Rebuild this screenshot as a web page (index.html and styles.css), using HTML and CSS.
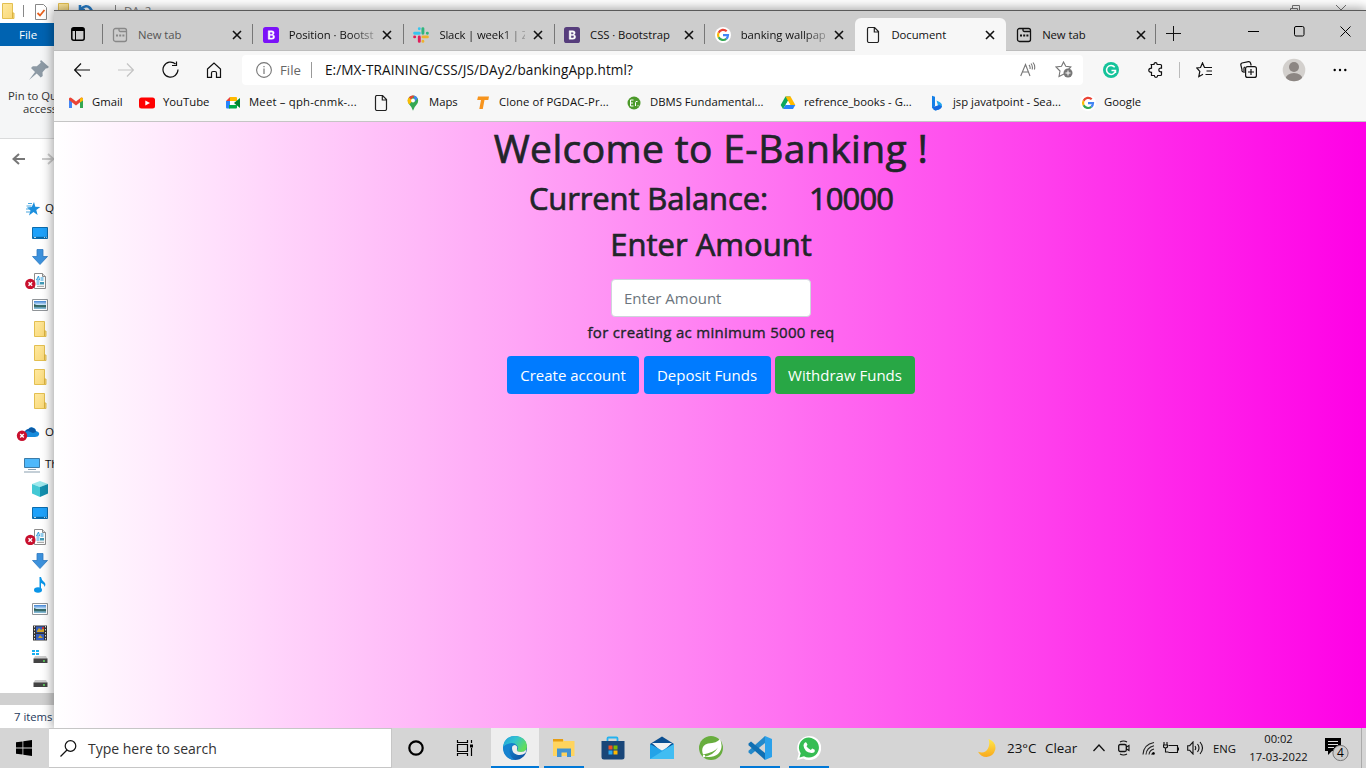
FILE: index.html
```
<!DOCTYPE html>
<html lang="en">
<head>
<meta charset="utf-8">
<title>Document</title>
<link rel="stylesheet" href="styles.css">
</head>
<body>
<svg class="defs" width="0" height="0">
  <defs>
    <linearGradient id="folderFill" x1="0" y1="0" x2="1" y2="1"><stop offset="0" stop-color="#ffe9a0"/><stop offset="1" stop-color="#f8d775"/></linearGradient>
    <linearGradient id="edgeA" x1="0" y1="0" x2="1" y2="1"><stop offset="0" stop-color="#1b9de2"/><stop offset="1" stop-color="#0c4a9c"/></linearGradient>
    <linearGradient id="edgeB" x1="0" y1="0" x2="1" y2=".5"><stop offset="0" stop-color="#219fdc"/><stop offset=".5" stop-color="#32c3d0"/><stop offset="1" stop-color="#62dd5b"/></linearGradient>
    <linearGradient id="moonFill" x1="0" y1="0" x2="0" y2="1"><stop offset="0" stop-color="#ffe84a"/><stop offset="1" stop-color="#f9a91c"/></linearGradient>
    <linearGradient id="skyFill" x1="0" y1="0" x2="0" y2="1"><stop offset="0" stop-color="#3f83d4"/><stop offset=".5" stop-color="#d8efff"/><stop offset=".55" stop-color="#326b6b"/><stop offset="1" stop-color="#8fc4e4"/></linearGradient>
  </defs>
  <symbol id="x" viewBox="0 0 10 10"><path d="M1 1l8 8M9 1L1 9" fill="none" stroke="currentColor" stroke-width="1.6"/></symbol>
  <symbol id="newtab" viewBox="0 0 16 16"><path d="M3.500 1.500h9a2 2 0 0 1 2 2v9a2 2 0 0 1-2 2h-9a2 2 0 0 1-2-2v-9a2 2 0 0 1 2-2zM7 1.500v1.500q0 1.500 1.500 1.500h6" fill="none" stroke="currentColor" stroke-width="1.300"/><path d="M4 7.500h2v2H4zm3.200 0h2v2h-2zm3.200 0h2v2h-2z" fill="currentColor"/></symbol>
  <symbol id="doc" viewBox="0 0 16 16"><path d="M2.500 2a1.500 1.500 0 0 1 1.500-1.500h5.500l4 4V14a1.500 1.500 0 0 1-1.500 1.500H4A1.500 1.500 0 0 1 2.500 14zM9.300.5V5h4.200" fill="none" stroke="#222" stroke-width="1.200"/></symbol>
  <symbol id="google" viewBox="0 0 16 16"><circle cx="8" cy="8" r="8" fill="#fff"/><g fill="none" stroke-width="2.200"><path d="M11.700 4.300A5 5 0 0 0 3.600 5.700" stroke="#ea4335"/><path d="M3.600 5.700a5 5 0 0 0 0 4.600" stroke="#fbbc05"/><path d="M3.600 10.300a5 5 0 0 0 7.700 1.500" stroke="#34a853"/><path d="M11.300 11.800A5 5 0 0 0 13 8.200H8" stroke="#4285f4"/></g></symbol>
  <symbol id="folder" viewBox="0 0 16 16"><path d="M2.500.5h10v9.500h1.500v5.500H2.500z" fill="url(#folderFill)" stroke="#e3bf50"/><path d="M12.500 15V9.500" stroke="#d9b040"/></symbol>
  <symbol id="desktop" viewBox="0 0 16 12"><path d="M.5.5h15v11H.5z" fill="#1da1fa" stroke="#0b6cad"/><path d="M1 9.800h14v1.400H1z" fill="#0767a3"/><path d="M2 10.400h2m8 0h1m1 0h.8" stroke="#fff" stroke-width=".8"/></symbol>
  <symbol id="down" viewBox="0 0 16 16"><path d="M5 .5h6v7h4.500L8 15.500.5 7.500H5z" fill="#3c91dc" stroke="#2d79c0" stroke-width=".8"/></symbol>
  <symbol id="docs" viewBox="0 0 24 16"><path d="M9.500.5h8l3 3v12h-11z" fill="#fff" stroke="#8c8c8c"/><path d="M17.500.5v3h3" fill="#ddd" stroke="#8c8c8c"/><path d="M11.500 7h3l-1-4-2 4M15.500 5h3M15.500 7h3M11.500 9h3M11.500 11h3" stroke="#269bdc" fill="none"/><path d="M15 9h4v2.500h-4z" fill="#4199b5"/><path d="M12 13.300h7" stroke="#999"/><circle cx="5.300" cy="12" r="5.200" fill="#c8102e" transform="translate(0 -1)"/><path d="M3.500 9.200l3.600 3.600m0-3.600l-3.600 3.600" stroke="#fff" stroke-width="1.400"/></symbol>
  <symbol id="picture" viewBox="0 0 16 12"><path d="M.5.5h15v11H.5z" fill="#fff" stroke="#909498"/><path d="M2 2h12v8H2z" fill="url(#skyFill)"/><path d="M2 5l5 2 7 .3V8L2 7.500z" fill="#32605a"/></symbol>
  <symbol id="boot" viewBox="0 0 16 16"><rect width="16" height="16" rx="2.600" fill="currentColor"/><path d="M5.200 3.700h3.700q2.300.1 2.300 2.100 0 1.500-1.300 1.900 1.800.4 1.800 2.300 0 2.200-2.700 2.300H5.200zM6.900 7.200h1.900q.8-.1.800-1 0-1-1-1H6.900zm0 3.700h2.200q.9-.1.900-1.100 0-1.200-1-1.200H6.900z" fill="#fff" fill-rule="evenodd" stroke="#fff" stroke-width=".4"/></symbol>
</svg>

<div class="screen">
  <section class="explorer">
    <div class="ex-title">
      <svg width="16" height="16"><use href="#folder"/></svg><i class="bar"></i>
      <svg class="check" width="14" height="16"><path d="M1.500.5h8l3 3v12h-11z" fill="#fff" stroke="#888"/><path d="M3.500 9l2.500 2.500L10.500 6" fill="none" stroke="#e8601c" stroke-width="1.800"/></svg>
      <svg class="fold2" width="16" height="16"><use href="#folder"/></svg>
      <svg class="undo" width="16" height="16" viewBox="0 0 16 16"><path d="M2 2v5h5M3 6q5-5 9-1t-2 8" fill="none" stroke="#277cc7" stroke-width="2.600"/></svg>
      <i class="bar bar2"></i><span>DA_2</span>
      <svg class="ex-restore" width="12" height="12"><path d="M1.500 4.500h7v7h-7zM3.500 4V1.500h7v7H9" fill="none" stroke="#777"/></svg>
      <svg class="ex-close" width="12" height="12"><path d="M1 1l10 10M11 1L1 11" stroke="#777"/></svg>
    </div>
    <div class="ex-file">File</div>
    <div class="ribbon">
      <svg width="22" height="22" viewBox="0 0 22 22"><path d="M13 1l8 7-2 1.500-1-.3-3.500 4 .2 3.800-2 1.500-4-4L1 21l6-8-4-4 1.800-1.800 4 .1 4-3.500-.7-1.300z" fill="#8d9aa5"/></svg>
      <span>Pin to Qu</span><span class="r2">access</span>
    </div>
    <div class="ex-nav">
      <svg width="13" height="12"><path d="M7 1L1.500 6 7 11M2 6h11" fill="none" stroke="#777" stroke-width="2"/></svg>
      <svg width="13" height="12"><path d="M6 1l5.500 5L6 11M0 6h11" fill="none" stroke="#ccc" stroke-width="1.800"/></svg>
    </div>
    <div class="tree">
      <div class="row quick"><svg width="16" height="14" viewBox="0 0 16 14"><path d="M9 0l1.300 4.800 5 .1-4 3 1.300 5L8.500 10 4 13.500l1.500-5-3.500-3 4.700-.4z" fill="#1b8fdd"/><path d="M3 1.500h4M1.500 4h5M1 7h4M1 10h4" stroke="#4ba7df"/></svg><span>Quick</span></div>
      <div class="row"><svg width="16" height="12"><use href="#desktop"/></svg></div>
      <div class="row"><svg width="16" height="16"><use href="#down"/></svg></div>
      <div class="row wide"><svg width="24" height="16"><use href="#docs"/></svg></div>
      <div class="row"><svg width="16" height="12"><use href="#picture"/></svg></div>
      <div class="row"><svg width="16" height="16"><use href="#folder"/></svg></div>
      <div class="row"><svg width="16" height="16"><use href="#folder"/></svg></div>
      <div class="row"><svg width="16" height="16"><use href="#folder"/></svg></div>
      <div class="row"><svg width="16" height="16"><use href="#folder"/></svg></div>
      <div class="row cloud"><svg width="24" height="16" viewBox="0 0 24 16"><path d="M8 9q0-4 4-4.500Q14 1 18 3q2 1 2 3 4 1 3 4-1 2-4 2h-9q-3-1-2-3z" fill="#168bdc"/><path d="M9 7q1-3 3.500-3Q15 1 19 4l1 3-3 1-5-2z" fill="#0c59a4"/><circle cx="6" cy="10.800" r="5.200" fill="#c8102e"/><path d="M4.200 9l3.600 3.600m0-3.600l-3.600 3.600" stroke="#fff" stroke-width="1.400"/></svg><span>One</span></div>
      <div class="row pc"><svg width="18" height="16"><path d="M1.500 1.500h15v9h-15z" fill="#4db8fb" stroke="#3c7ca8"/><path d="M5 12.500h8M1 15h16" stroke="#8aa0b0" stroke-width="1.200"/></svg><span>This</span></div>
      <div class="row"><svg width="16" height="16" viewBox="0 0 16 16"><path d="M0 3l8-3 8 3-8 3z" fill="#9de8ec"/><path d="M0 3l8 3v10l-8-3.500z" fill="#43c8d4"/><path d="M16 3L8 6v10l8-3.500z" fill="#128fae"/></svg></div>
      <div class="row"><svg width="16" height="12"><use href="#desktop"/></svg></div>
      <div class="row wide"><svg width="24" height="16"><use href="#docs"/></svg></div>
      <div class="row"><svg width="16" height="16"><use href="#down"/></svg></div>
      <div class="row"><svg width="16" height="16"><ellipse cx="6" cy="13" rx="4" ry="2.800" fill="#0a95e8"/><path d="M7.500 0H9q.5 3 3 5t.5 5q0-3-3.500-4v7H7.500z" fill="#0a95e8"/></svg></div>
      <div class="row"><svg width="16" height="12"><use href="#picture"/></svg></div>
      <div class="row"><svg width="16" height="16"><path d="M1 .5h14v15H1z" fill="#343434"/><path d="M2.500 1v14m11-14v14" stroke="#ddd" stroke-dasharray="1.500 1.500"/><path d="M4 1.500h8v6H4zM4 9h8v6H4z" fill="#355fc0"/><path d="M5 6l2-3 2 2 3-2v4H5zM6 13l2-3 3 3z" fill="#d0a52a"/><path d="M10 2h2v2h-2z" fill="#c33"/></svg></div>
      <div class="row"><svg width="16" height="16"><path d="M0 1h3v2H0zm4 0h3v2H4zM0 4h3v2H0zm4 0h3v2H4z" fill="#18b0f0"/><path d="M3 7h11l1.500 3h-14z" fill="#ccc"/><path d="M1.500 9.500h14V14h-14z" fill="#444"/><path d="M11 12h2" stroke="#5fe060" stroke-width="1.500"/></svg></div>
      <div class="row"><svg width="16" height="16"><path d="M3 7h11l1.500 3h-14z" fill="#ccc"/><path d="M1.500 9.500h14V14h-14z" fill="#444"/><path d="M11 12h2" stroke="#5fe060" stroke-width="1.500"/></svg></div>
    </div>
    <div class="ex-scroll"></div>
    <div class="ex-status">7 items</div>
  </section>

  <section class="edge">
    <header class="tabs">
      <div class="tabmenu"><svg width="14" height="14"><rect x=".8" y=".8" width="12.400" height="12.400" rx="2" fill="none" stroke="#000" stroke-width="1.500"/><path d="M1 1h12v3H1z"/><path d="M4.500 4v9" stroke="#000"/></svg></div>
      <div class="tab dim"><svg width="16" height="16"><use href="#newtab"/></svg><span class="t1">New tab</span><svg class="cl" width="10" height="10"><use href="#x"/></svg></div>
      <div class="tab"><svg class="purple" width="16" height="16"><use href="#boot"/></svg><span class="fade">Position · Bootst</span><svg class="cl" width="10" height="10"><use href="#x"/></svg></div>
      <div class="tab"><svg width="16" height="16" viewBox="0 0 16 16"><g stroke-width="2.900" stroke-linecap="round"><path d="M6.300 1.600v.1M1.600 6.200h4.700" stroke="#36c5f0"/><path d="M9.900 1.600v4.600M14.400 6.200h-.1" stroke="#2eb67d"/><path d="M14.400 9.900H9.900M9.900 14.400v-.1" stroke="#ecb22e"/><path d="M6.300 14.400V9.900M1.600 9.900h.1" stroke="#e01e5a"/></g></svg><span class="fade slack">Slack | week1 | Z</span><svg class="cl" width="10" height="10"><use href="#x"/></svg></div>
      <div class="tab"><svg class="indigo" width="16" height="16"><use href="#boot"/></svg><span>CSS · Bootstrap</span><svg class="cl" width="10" height="10"><use href="#x"/></svg></div>
      <div class="tab"><svg width="16" height="16"><use href="#google"/></svg><span class="fade">banking wallpap</span><svg class="cl" width="10" height="10"><use href="#x"/></svg></div>
      <div class="tab active"><svg width="16" height="16"><use href="#doc"/></svg><span>Document</span><svg class="cl" width="10" height="10"><use href="#x"/></svg></div>
      <div class="tab nosep"><svg width="16" height="16"><use href="#newtab"/></svg><span>New tab</span><svg class="cl" width="10" height="10"><use href="#x"/></svg></div>
      <div class="plus"><svg width="15" height="15"><path d="M7.500 0v15M0 7.500h15" stroke="#111"/></svg></div>
      <div class="winbtns">
        <svg width="11" height="11"><path d="M0 5.500h11" stroke="#000"/></svg>
        <svg width="11" height="11"><rect x=".5" y=".5" width="9.500" height="9.500" rx="1.500" fill="none" stroke="#000"/></svg>
        <svg width="11" height="11"><path d="M.5.5l10 10M10.500.5l-10 10" stroke="#000"/></svg>
      </div>
    </header>

    <nav class="toolbar">
      <svg width="16" height="14"><path d="M7 .5L.7 7 7 13.500M1 7h15" fill="none" stroke="#111" stroke-width="1.200"/></svg>
      <svg width="16" height="14"><path d="M9 .5L15.300 7 9 13.500M0 7h15" fill="none" stroke="#c4c4c4" stroke-width="1.200"/></svg>
      <svg width="17" height="17"><path d="M13.500 3A7.500 7.500 0 1 0 16 8.500M14.500 .5V4.500H10" fill="none" stroke="#111" stroke-width="1.200"/></svg>
      <svg width="16" height="16"><path d="M1.500 7L8 1l6.500 6v8.300h-4V11q0-1.500-1.500-1.500H7Q5.500 9.500 5.500 11v4.300h-4z" fill="none" stroke="#111" stroke-width="1.200"/></svg>
      <div class="address">
        <svg width="16" height="16"><circle cx="8" cy="8" r="7.400" fill="none" stroke="#777" stroke-width="1.100"/><path d="M8 6.500V12M8 4v1.300" stroke="#777" stroke-width="1.200"/></svg>
        <span class="scheme">File</span><i></i><span class="url">E:/MX-TRAINING/CSS/JS/DAy2/bankingApp.html?</span>
        <svg class="read" width="16" height="16"><path d="M.7 14L5.500 2.500 10 14M2.300 10h6.200M9 3q1.500 1.500 1 4M11 1.500q2 2.500 1.200 6M13 .5q2.500 3 1.400 7" fill="none" stroke="#777" stroke-width="1.100"/></svg>
        <svg class="fav" width="18" height="17"><path d="M9 13l-5 2.500 1-5.500-4-4 5.500-.8L8.500 1l2.300 4.300 5 .7L13 9" fill="none" stroke="#777" stroke-width="1.100"/><circle cx="13" cy="12" r="4.500" fill="#777"/><path d="M13 9.500v5M10.500 12h5" stroke="#fff"/></svg>
      </div>
      <svg class="gram" width="16" height="16"><circle cx="8" cy="8" r="8" fill="#15c39a"/><path d="M11.700 5.300A4.500 4.500 0 1 0 12.500 8.500H8.500M12.500 8v3" fill="none" stroke="#fff" stroke-width="1.500"/></svg>
      <svg class="puz" width="16" height="16"><path d="M2.500 2.500H6Q6 .7 7.500.7T9.200 2.500h3.300q1 0 1 1v2.700h-1q-1.700.2-1.700 1.800t1.700 1.800h1v2.700q0 1-1 1H9.700q-.1 1.800-1.700 1.800T6.300 13.500H3.500V10.300q-2.700.1-2.700-2T3.500 6.200V2.500" fill="none" stroke="#111" stroke-width="1.200"/></svg>
      <i class="tsep"></i>
      <svg class="favs" width="18" height="16"><path d="M8 4.500L6.500 1 4.500 5.500.8 6l3 3.400-1 5.300L7 12.300M6.500 1l2 4.500H16M10.500 9H16M9.500 12.500H16" fill="none" stroke="#111" stroke-width="1.200"/></svg>
      <svg class="coll" width="18" height="17"><path d="M3 11Q1.500 10 2 8.500L.8 4Q.6 2.500 2 2L8.500.7Q10 .5 10.500 2l.7 2.500M4 12V7q0-1 1-1" fill="none" stroke="#111" stroke-width="1.200"/><rect x="5.600" y="5.600" width="10.800" height="10.800" rx="2" fill="none" stroke="#111" stroke-width="1.200"/><path d="M11 8v6M8 11h6" stroke="#111" stroke-width="1.200"/></svg>
      <svg class="avatar" width="24" height="24"><defs><clipPath id="av"><circle cx="12" cy="12" r="11.300"/></clipPath></defs><circle cx="12" cy="12" r="11.300" fill="#d3d0cd"/><circle cx="12" cy="9" r="5" fill="#8c8683"/><ellipse cx="12" cy="21" rx="8.500" ry="6" fill="#8c8683" clip-path="url(#av)"/></svg>
      <svg class="dots" width="14" height="4"><circle cx="1.700" cy="2" r="1.200"/><circle cx="7" cy="2" r="1.200"/><circle cx="12.300" cy="2" r="1.200"/></svg>
    </nav>

    <nav class="bookmarks">
      <a><svg width="16" height="16"><path d="M1 3.500v9.500h3V7z" fill="#4285f4"/><path d="M15 3.500v9.500h-3V7z" fill="#34a853"/><path d="M1 5V3.500q1-1.500 2.500-.5L8 6.500 12.500 3q1.500-1 2.500.5V5L8 10.500z" fill="#ea4335"/><path d="M12 4l.5-1q1.500-1 2.500.5V5.500L12 7.500z" fill="#fbbc04"/></svg><span>Gmail</span></a>
      <a><svg width="16" height="16"><rect y="2.500" width="16" height="11" rx="2.500" fill="red"/><path d="M6.300 5.500v5L11 8z" fill="#fff"/></svg><span>YouTube</span></a>
      <a><svg width="16" height="16"><path d="M5 2h6q1 0 1 1v3H5z" fill="#ffba00"/><path d="M1 6l4-4v4z" fill="#ea4335"/><path d="M1 6h4v7.500H2q-1 0-1-1z" fill="#2684fc"/><path d="M4 10h8v2.500q0 1-1 1H4z" fill="#00ac47"/><path d="M9 8l6-5v10z" fill="#00832d"/><path d="M5 6h4v4H5z" fill="#fff"/></svg><span class="meet">Meet – qph-cnmk-...</span></a>
      <a><svg width="16" height="16"><use href="#doc"/></svg></a>
      <a><svg width="16" height="16"><path d="M8 15.800Q7 12 4.500 9.700 2.800 8 2.800 5.600A5.200 5.200 0 0 1 13.200 5.600Q13.200 8 11.500 9.700 9 12 8 15.800z" fill="#34a853"/><path d="M3.500 8.500A5.200 5.200 0 0 1 4 2.200l4 3.400-3.800 4z" fill="#fbbc04"/><path d="M4 2.200A5.200 5.200 0 0 1 9.500.7L6 4.600z" fill="#ea4335"/><path d="M9 .6a5.200 5.200 0 0 1 3.700 2.800L9.500 7z" fill="#4285f4"/><circle cx="8" cy="5.500" r="1.900" fill="#fff"/></svg><span>Maps</span></a>
      <a><svg width="16" height="16"><path d="M3 1.500h11l-.7 3.500h-3.800L7.800 14H4.300L6 5H2.200z" fill="#f7941d"/></svg><span class="clone">Clone of PGDAC-Pr...</span></a>
      <a><svg width="16" height="16"><circle cx="8" cy="8" r="6.500" fill="#4c9a2a"/><path d="M7.500 5H4.500v6h3M4.500 8h2.500M9.500 11V7.500q0-1.500 2-1M12 10.300v1" stroke="#fff" fill="none"/></svg><span>DBMS Fundamental...</span></a>
      <a><svg width="16" height="16"><path d="M5.500 1.500h5l-5 8.500L3 14 .7 10z" fill="#0da85c"/><path d="M5.500 1.500h5l4.800 8.500h-5z" fill="#ffba00"/><path d="M5.500 10h9.800L13 14H3z" fill="#2684fc"/><path d="M8 6l2.300 4H5.700z" fill="#fff"/></svg><span>refrence_books - G...</span></a>
      <a><svg width="16" height="16"><path d="M3 .7l3 1v9L4 14l-1-1.500z" fill="#1580e8"/><path d="M7.500 5.500l3.500 1.800q2.500 1.500 2 4-.5 2-3 3.200L6.500 15.500Q4 15 4 13l5-2.500z" fill="#22a6ee"/><path d="M4 12l6.500-2 2.500 1.500q-.5 2-3 3l-3.500 1Q4 15 4 12z" fill="#1769df"/></svg><span>jsp javatpoint - Sea...</span></a>
      <a><svg width="16" height="16"><use href="#google"/></svg><span>Google</span></a>
    </nav>

    <main class="page">
      <h1>Welcome to E-Banking !</h1>
      <h2 class="balance"><span>Current Balance:</span><span class="num">10000</span></h2>
      <h2 class="enter">Enter Amount</h2>
      <input type="text" placeholder="Enter Amount">
      <p>for creating ac minimum 5000 req</p>
      <div class="btns">
        <button class="w1">Create account</button><button class="w2">Deposit Funds</button><button class="w3 green">Withdraw Funds</button>
      </div>
    </main>
  </section>

  <footer class="taskbar">
    <div class="start"><svg width="16" height="16"><path d="M0 2.300L6.500 1.400v6.200H0zM7.300 1.300L16 0v7.600H7.300zM0 8.400h6.500v6.200L0 13.700zM7.300 8.400H16V16l-8.700-1.300z"/></svg></div>
    <div class="search"><svg width="17" height="17"><circle cx="10.500" cy="6" r="5.300" fill="none" stroke="#111" stroke-width="1.200"/><path d="M7 10L.5 16.500" stroke="#111" stroke-width="1.300"/></svg><span>Type here to search</span></div>
    <div class="app"><svg width="18" height="18"><circle cx="9" cy="9" r="6.700" fill="none" stroke="#000" stroke-width="2.200"/></svg></div>
    <div class="app"><svg width="18" height="16"><path d="M1.500 0v2.500h10V0M1.500 16v-2.500h10V16M1.500 4.500h10v7h-10zM15.500 0v3M15.500 8v8" fill="none" stroke="#000" stroke-width="1.200"/><path d="M14 4.500h3v3h-3z"/></svg></div>
    <div class="app on"><svg width="24" height="24" viewBox="0 0 24 24"><circle cx="12" cy="12" r="12" fill="url(#edgeA)"/><path d="M0 11Q1.500 0 12 0q11 .5 12 10 0 6-6 6-4 0-4-2 2-2 0-4.500Q11 6 6 7.500q-4 1.200-6 3.500z" fill="url(#edgeB)"/><path d="M9 12q0-3 3-3 3 1 2 4-1 3 4 3 3 0 5.500-2.500l-1 3.500q-4 3-9 1.500Q9 17 9 12z" fill="#eee"/><path d="M0 11q5-5 11-2-5 1-4.500 7 1 6 6 8Q1 23.500 0 11z" fill="#1683d0"/></svg></div>
    <div class="app run"><svg width="22" height="20" viewBox="0 0 22 20"><path d="M0 1h10l1 2h10.500v15H0z" fill="#ffd45e"/><path d="M0 1h10v2.500H0z" fill="#e69d12"/><path d="M4 19v-8.500h14V19h-4v-4.500H8.500V19z" fill="#4293d2"/></svg></div>
    <div class="app"><svg width="24" height="24" viewBox="0 0 24 24"><path d="M6.500 6V2.500q0-1 1-1h8q1 0 1 1V6" fill="none" stroke="#24b2ef" stroke-width="1.800"/><path d="M.5 5h23v16q0 2.500-2.500 2.500H3Q.5 23.500.5 21z" fill="#194678"/><path d="M7.500 9.500h4v4h-4z" fill="#f25022"/><path d="M12.500 9.500h4v4h-4z" fill="#7fba00"/><path d="M7.500 14.500h4v4h-4z" fill="#29a8ef"/><path d="M12.500 14.500h4v4h-4z" fill="#ffb900"/></svg></div>
    <div class="app"><svg width="24" height="24" viewBox="0 0 24 24"><path d="M0 8L12 .5 24 8v8H0z" fill="#0b4f91"/><path d="M2 7h20L12 16z" fill="#f2f2f2"/><path d="M0 8l12 6.500L24 8v15H0z" fill="#23a3e8"/><path d="M0 23L24 8v15z" fill="#42bdf2"/></svg></div>
    <div class="app"><svg width="24" height="24" viewBox="0 0 24 24"><circle cx="12" cy="12" r="12" fill="#68ad3e"/><path d="M21 3q4 9-2 15-5 4-14 2.500 9-.5 14-9-4 5-15 7Q1 10 9 7.500 18 7 21 3z" fill="#fff"/><circle cx="5" cy="20" r="1.200" fill="#fff"/></svg></div>
    <div class="app run"><svg width="24" height="24" viewBox="0 0 24 24"><path d="M17 0l7 3v18l-7 3z" fill="#2ba1ea"/><path d="M17 0v7L3 18.500.5 16.500v-1.700z" fill="#2489ca"/><path d="M17 24v-7L3 5.500.5 7.500v1.700z" fill="#1070b3"/></svg></div>
    <div class="app run"><svg width="24" height="24" viewBox="0 0 24 24"><path d="M0 24l1.700-6.200A12 12 0 1 1 6.200 22.400z" fill="#fff"/><path d="M2.500 21.500l1.200-4.200A10 10 0 1 1 7 20.300z" fill="#36bd53"/><path d="M8 6.500q1-.5 1.500.3l1 2-1 1.500q1.500 2.500 4.300 3.700l1.400-1.500 2.500 1.300q.7 3.200-3.200 3.200Q7 16 6.500 9.500 6.600 7.500 8 6.500z" fill="#fff"/></svg></div>
    <div class="tray">
      <svg class="moon" width="18" height="18"><path d="M10.500 0q8 3 6.800 10.500Q15.500 17.500 8.500 18 3 18 0 12.700q7 2.300 10-3.200 2.300-4.500.5-9.500z" fill="url(#moonFill)"/></svg>
      <span class="temp">23°C</span><span class="clear">Clear</span>
      <svg class="chev" width="12" height="8"><path d="M.5 7L6 1l5.500 6" fill="none" stroke="#111" stroke-width="1.300"/></svg>
      <svg class="cam" width="12" height="16"><rect x=".7" y="4.500" width="7.600" height="7" rx="1.500" fill="none" stroke="#111" stroke-width="1.300"/><path d="M8.500 7l2.500-1.500v5L8.500 9M2 2q3.500-2 7 0M2 14q3.500 2 7 0" fill="none" stroke="#111" stroke-width="1.100"/></svg>
      <svg class="wifi" width="13" height="14"><g fill="none" stroke="#222" stroke-width="1.100"><path d="M1 13.500Q1.500 3.500 12 1.500M4 13.500Q4.500 6.500 12 4.700M7 13.500q.5-4.500 5-5.500M9.500 13.500l2.500-2"/></g><circle cx="11.500" cy="12.500" r="1.300"/></svg>
      <svg class="batt" width="16" height="14"><path d="M5.500 4.500h9v7h-9M15.500 6.500v3M1 1v3M4 1v3M.5 4h4v2q-2 2-4 0zM2.500 7v4h3" fill="none" stroke="#111" stroke-width="1.100"/></svg>
      <svg class="vol" width="17" height="14"><path d="M.7 4.700h2L6 1v12L2.700 9.300h-2zM8 5q1.500 2 0 4M10.500 3q3 4 0 8M13 1q5 6 0 12" fill="none" stroke="#111" stroke-width="1.100"/></svg>
      <span class="eng">ENG</span>
      <div class="clock"><span>00:02</span><span>17-03-2022</span></div>
      <svg class="action" width="26" height="26" viewBox="0 0 26 26"><path d="M1 2h16v13H8l-4 4v-4H1z"/><path d="M4 5.500h10M4 8.500h10M4 11.500h6" stroke="#ddd"/><circle cx="16.500" cy="17" r="7.600" fill="#ccc" stroke="#777"/><text x="16.500" y="21" text-anchor="middle">4</text></svg>
    </div>
  </footer>
</div>
</body>
</html>
```
FILE: styles.css
```
* { box-sizing: border-box; }
body { margin: 0; font-family: "Open Sans", "Noto Sans", sans-serif; color: #111; overflow: hidden; }
svg { display: block; flex: none; }
.defs { position: absolute; }
.screen { position: relative; width: 1366px; height: 768px; overflow: hidden; background: #fff; }
span { white-space: pre; }

.explorer { position: absolute; left: 0; top: 0; width: 1366px; height: 728px; background: #fff; display: flex; flex-direction: column; font-size: 11.5px; }
.ex-title { height: 23px; padding: 3px 0 0 0; display: flex; align-items: flex-start; color: #777; }
.bar { width: 1px; height: 12px; background: #888; margin: 2px 0 0 7px; }
.check { margin: 1px 0 0 10px; }
.fold2 { margin-left: 8px; }
.undo { margin-left: 6px; }
.bar2 { margin-left: 21px; }
.ex-title span { margin-left: 8px; line-height: 16px; width: 1165px; }
.ex-restore { margin-top: 1px; }
.ex-close { margin: 1px 0 0 34px; }
.ex-file { width: 54px; height: 23px; background: #0063b1; color: #fff; line-height: 23px; padding-left: 19px; font-size: 11.5px; }
.ribbon { height: 93px; background: #f5f6f7; border-bottom: 1px solid #dadbdc; padding: 13px 0 0 8px; line-height: 13px; display: flex; flex-direction: column; color: #333; font-size: 11.3px; }
.ribbon svg { margin: 0 0 8px 20px; }
.ribbon .r2 { padding-left: 15px; }
.ex-nav { height: 58px; padding: 14px 0 0 12px; display: flex; gap: 17px; }
.tree { height: 496px; }
.row { height: 24px; padding-left: 32px; display: flex; align-items: center; }
.row span { line-height: 14px; margin-top: -2px; }
.row.quick { padding-left: 25px; gap: 4px; }
.row.wide { padding-left: 25px; }
.row.cloud { height: 24px; margin: 8px 0; padding-left: 16px; gap: 5px; }
.row.pc { padding-left: 23px; gap: 4px; }
.ex-scroll { height: 12px; background: #d0d0d0; }
.ex-status { height: 23px; padding-left: 14px; line-height: 23px; color: #1e395b; font-size: 11.3px; }

.edge { position: absolute; left: 54px; top: 10px; width: 1312px; height: 718px; border-top: 1px solid #5a5a5a; background: #f7f7f7; box-shadow: 0 0 11px 1px rgba(0,0,0,.4); display: flex; flex-direction: column; }
.tabs { height: 40px; background: #cdcdcd; border-bottom: 1px solid #bdbdbd; display: flex; align-items: flex-end; }
.tabmenu { width: 47.500px; height: 32px; padding: 9px 0 0 17px; }
.tab { position: relative; width: 150.700px; height: 32px; padding: 1px 0 0 9.500px; display: flex; align-items: center; gap: 10px; font-size: 11.300px; border-left: 1px solid transparent; }
.tab::before { content: ""; position: absolute; left: -1px; top: 6px; width: 1px; height: 20px; background: #777; }
.tab.active { background: #f7f7f7; border-radius: 6px 6px 0 0; height: 33px; margin-bottom: -1px; padding-top: 0; }
.tab.active::before, .tab.nosep::before { display: none; }
.tab span { width: 86px; line-height: 18px; letter-spacing: -.05px; }
.tab span.slack { letter-spacing: -.15px; }
.fade { -webkit-mask-image: linear-gradient(90deg, #000 72%, rgba(0,0,0,.25) 100%); mask-image: linear-gradient(90deg, #000 72%, rgba(0,0,0,.25) 100%); }
.tab.dim { color: #555; }
.tab.dim > svg:first-child { color: #888; }
.tab .cl { color: #111; margin-left: -2.500px; }
.purple { color: #7b12f8; }
.indigo { color: #563d7c; }
.plus { width: 42px; height: 32px; padding: 8px 0 0 9px; border-left: 1px solid transparent; position: relative; }
.plus::before { content: ""; position: absolute; left: -2px; top: 6px; width: 1px; height: 20px; background: #777; }
.winbtns { margin: 0 15px 13px auto; display: flex; gap: 35px; }

.toolbar { height: 37px; display: flex; align-items: center; padding-left: 20px; }
.toolbar > svg:nth-child(2) { margin-left: 28px; }
.toolbar > svg:nth-child(3) { margin-left: 28px; }
.toolbar > svg:nth-child(4) { margin-left: 27px; }
.address { margin-left: 20px; width: 841px; height: 30px; border-radius: 4px; background: #fff; display: flex; align-items: center; padding-left: 14px; font-size: 13.200px; }
.scheme { margin-left: 8px; width: 31px; color: #666; }
.address i { width: 1px; height: 16px; background: #999; margin-right: 13px; }
.url { width: 695px; font-size: 13.600px; letter-spacing: .07px; }
.fav { margin-left: 19px; }
.gram { margin-left: 20px; }
.puz { margin-left: 29px; }
.tsep { width: 1px; height: 16px; background: #bbb; margin-left: 15px; }
.favs { margin-left: 16px; }
.coll { margin-left: 26px; }
.avatar { margin-left: 24px; }
.dots { margin-left: 27px; }

.bookmarks { height: 34px; border-bottom: 1px solid #c5c5c5; padding: 0 0 4px 14px; display: grid; grid-template-columns: 71px 86px 148px 32px 70px 151px 154px 149px 151px 80px; align-items: center; font-size: 11.300px; }
.bookmarks a { display: flex; align-items: center; gap: 8px; }
.bookmarks span { line-height: 14px; margin-top: -1px; }
.meet { letter-spacing: .2px; }
.clone { letter-spacing: .1px; }

.page { flex: 1; background: linear-gradient(90deg, #fff, #ff00e6); color: #212529; display: flex; flex-direction: column; align-items: center; padding-left: 2px; }
h1, h2 { margin: 0 0 8px; font-weight: 500; line-height: 1.2; -webkit-text-stroke: .7px #212529; }
h1 { font-size: 39px; height: 48px; line-height: 51px; white-space: pre; letter-spacing: .37px; }
h2 { font-size: 31px; height: 38.400px; line-height: 40px; white-space: pre; }
.balance { display: flex; gap: 41px; letter-spacing: -.13px; }
.num { letter-spacing: -.9px; }
input { margin-top: 8px; width: 200px; height: 38px; border: 1px solid #ced4da; border-radius: 4px; padding: 0 12px; font: 15px "Open Sans", sans-serif; }
input::placeholder { color: #6c757d; opacity: 1; }
p { margin: 2px 0 0; height: 24px; line-height: 26px; font-size: 15px; letter-spacing: .3px; -webkit-text-stroke: .35px #212529; white-space: pre; }
.btns { margin-top: 13px; display: flex; gap: 4.500px; }
button { height: 38px; border: 0; border-radius: 4px; background: #007bff; color: #fff; font: 15px "Open Sans", sans-serif; padding: 0; white-space: nowrap; }
.w1 { width: 132px; } .w2 { width: 127px; } .w3 { width: 140px; }
.green { background: #28a745; }

.taskbar { position: absolute; left: 0; top: 728px; width: 1366px; height: 40px; background: #d5d5d5; display: flex; }
.start { width: 49px; padding: 12px 0 0 16px; }
.search { width: 343px; border: 1px solid #c6c6c6; border-left: 0; background: #fff; display: flex; align-items: center; padding-left: 11px; gap: 11px; font-size: 14px; color: #333; }
.app { width: 49px; display: flex; align-items: center; justify-content: center; position: relative; padding-right: 2px; }
.app.on { background: #eee; width: 48px; margin: 0 1px 0 1px; padding: 0; }
.app.on::after, .app.run::after { content: ""; position: absolute; left: 4px; right: 5px; bottom: 0; height: 2px; background: #0078d7; }
.app.on::after { left: 0; right: 0; }
.tray { margin-left: auto; width: 388px; display: flex; align-items: center; font-size: 13.400px; }
.temp { margin-left: 11px; width: 38px; }
.clear { width: 48px; }
.cam { margin-left: 13px; }
.wifi { margin-left: 12px; }
.batt { margin-left: 8px; }
.vol { margin-left: 8px; }
.eng { margin-left: 9px; width: 29px; font-size: 11.300px; }
.clock { width: 73px; display: flex; flex-direction: column; align-items: center; font-size: 11.200px; line-height: 18px; }
.action { margin: 2px 0 0 9px; }
.action text { font: 12px "Open Sans", sans-serif; }
.tray::after { content: ""; margin-left: auto; margin-right: 4px; width: 1px; height: 40px; background: #aaa; }
```
